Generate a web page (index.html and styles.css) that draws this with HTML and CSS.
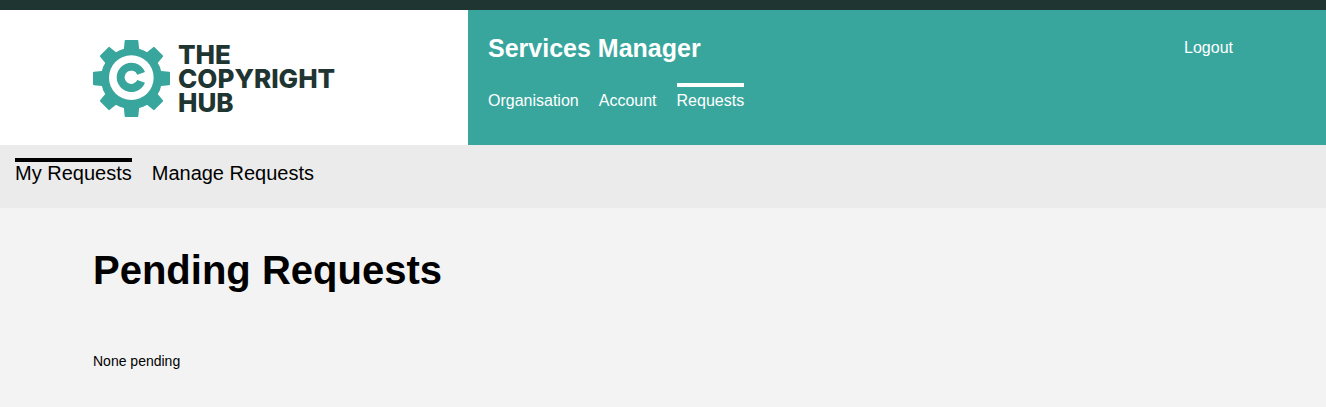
FILE: index.html
```html
<!DOCTYPE html>
<html lang="en">
<head>
<meta charset="utf-8">
<meta name="viewport" content="width=device-width, initial-scale=1">
<title>Services Manager - Pending Requests</title>
<link rel="stylesheet" href="styles.css">
</head>
<body>
<header class="header">
  <div class="brand">
    <a class="logo" href="#">
      <svg class="logo-mark" viewBox="0 0 231 231" aria-hidden="true">
        <defs>
          <path id="tooth" d="M95 3Q95 0 98 0H133Q136 0 136 3L139 34H92Z"/>
        </defs>
        <g class="gear">
          <use href="#tooth"/>
          <use href="#tooth" transform="rotate(45 115.500 115.500)"/>
          <use href="#tooth" transform="rotate(90 115.500 115.500)"/>
          <use href="#tooth" transform="rotate(135 115.500 115.500)"/>
          <use href="#tooth" transform="rotate(180 115.500 115.500)"/>
          <use href="#tooth" transform="rotate(225 115.500 115.500)"/>
          <use href="#tooth" transform="rotate(270 115.500 115.500)"/>
          <use href="#tooth" transform="rotate(315 115.500 115.500)"/>
          <circle cx="115.500" cy="115.500" r="92"/>
        </g>
        <circle class="gear-hole" cx="115" cy="113" r="67"/>
        <path class="gear" d="M156 128A44 44 0 1 1 156 96L133 104A20 20 0 1 0 133 120Z"/>
      </svg>
      <span class="logo-text">THE<br>COPYRIGHT<br>HUB</span>
    </a>
  </div>
  <div class="banner">
    <div class="banner-main">
      <div class="site-title">Services Manager</div>
      <nav class="nav" aria-label="Main">
        <a class="nav-link" href="#">Organisation</a>
        <a class="nav-link" href="#">Account</a>
        <a class="nav-link active" href="#" aria-current="page">Requests</a>
      </nav>
    </div>
    <a class="logout" href="#">Logout</a>
  </div>
</header>
<nav class="subnav" aria-label="Requests">
  <a class="subnav-link active" href="#" aria-current="page">My Requests</a>
  <a class="subnav-link" href="#">Manage Requests</a>
</nav>
<main class="content">
  <h1 class="page-title">Pending Requests</h1>
  <p class="message">None pending</p>
</main>
</body>
</html>
```
FILE: styles.css
```css
:root {
  --teal: #38a69d;
  --dark: #1e3532;
  --gutter: max(15px, calc((100% - 1140px) / 2));
}

* {
  box-sizing: border-box;
}

body {
  margin: 0;
  background: #f3f3f3;
  color: #000;
  font-family: "Liberation Sans", Arial, sans-serif;
  font-size: 14px;
  line-height: 20px;
}

a {
  color: inherit;
  text-decoration: none;
}

.header {
  display: grid;
  grid-template-columns: var(--gutter) 375px 1fr var(--gutter);
  border-top: 10px solid var(--dark);
  background: #fff;
}

.brand {
  grid-column: 2;
  padding: 30px 0 28px;
}

.logo {
  display: flex;
  gap: 8px;
}

.logo-mark {
  flex: none;
  width: 77px;
  height: 77px;
}

.gear {
  fill: var(--teal);
}

.gear-hole {
  fill: #fff;
}

.logo-text {
  padding-top: 3px;
  color: var(--dark);
  font-family: Inter, sans-serif;
  font-size: 26px;
  font-weight: 800;
  line-height: 24px;
}

.banner {
  grid-column: 3 / 5;
  display: flex;
  justify-content: space-between;
  align-items: flex-start;
  padding: 23px 93px 0 20px;
  background: var(--teal);
  color: #fff;
  font-size: 16px;
}

.site-title {
  font-size: 25px;
  font-weight: bold;
  line-height: 30px;
}

.nav {
  display: flex;
  gap: 20px;
  margin-top: 20px;
}

.nav-link {
  border-top: 4px solid transparent;
  padding-top: 4px;
}

.logout {
  padding-top: 5px;
}

.subnav {
  display: flex;
  gap: 20px;
  padding: 13px 15px 24px;
  background: #ebebeb;
  font-size: 20px;
  line-height: 22px;
}

.subnav-link {
  border-top: 4px solid transparent;
}

.active {
  border-top-color: currentColor;
}

.content {
  padding: 39px var(--gutter);
}

.page-title {
  margin: 0 0 58px;
  font-size: 40px;
  line-height: 46px;
}

.message {
  margin: 0;
}
```
